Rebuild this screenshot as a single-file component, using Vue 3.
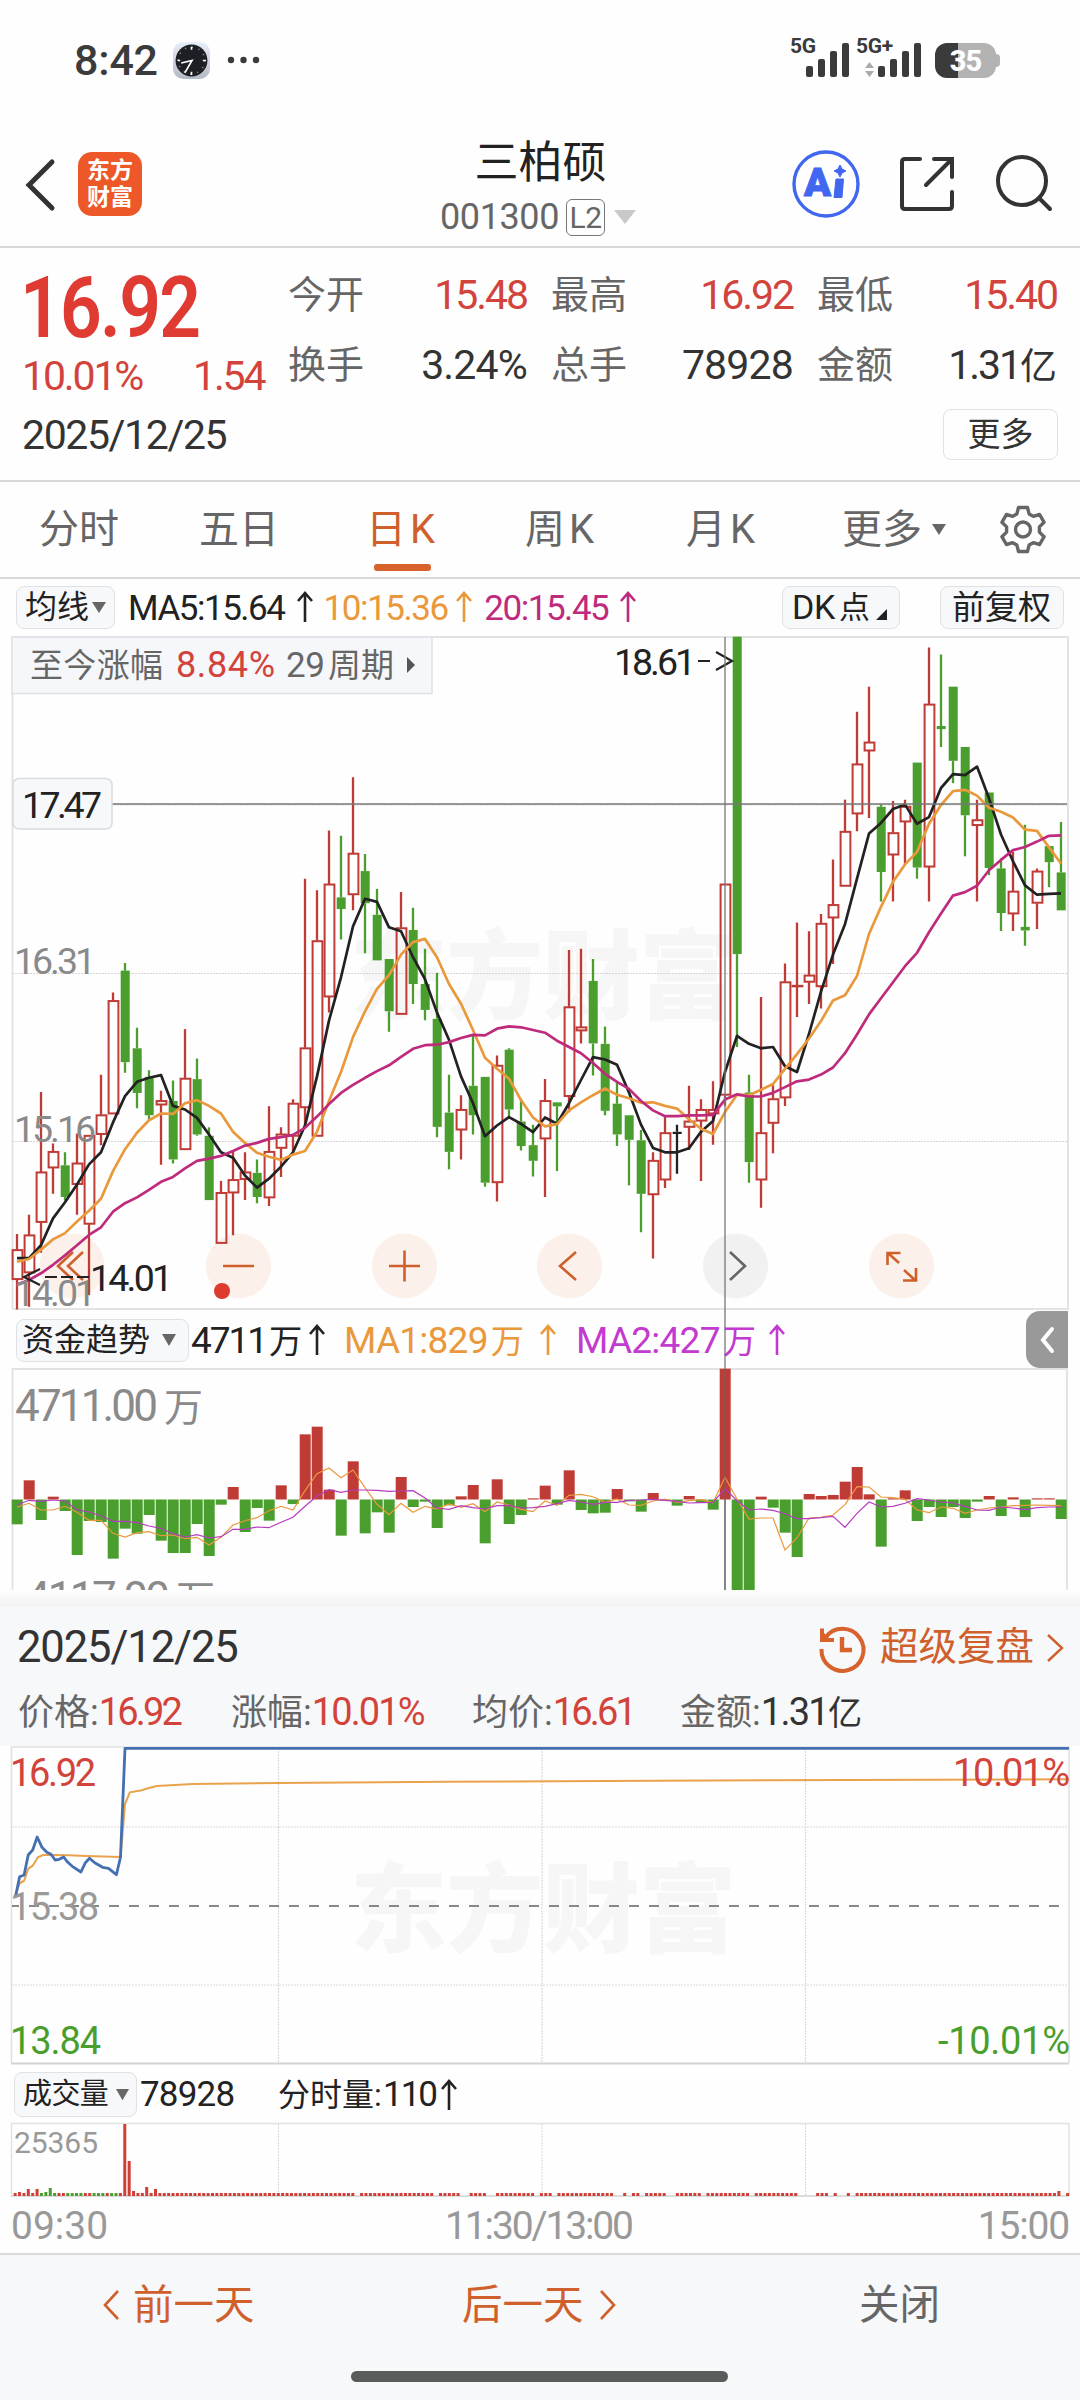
<script setup>
const UP = '#bf3b35'
const DOWN = '#4a9e2d'

const px = (i) => 17 + 12 * i
const ky = (v) => 630 + v / 2.24
const fy = (v) => 1300 + v / 3

// [colour, high, body top, body bottom, low]
const raw = `r 1353 1388 1455 1522|r 1310 1355 1440 1516|r 1035 1214 1327 1395|r 1150 1168 1205 1263|g 1170 1199 1270 1278|r 1128 1194 1242 1310|r 1132 1132 1331 1490|r 996 1086 1130 1154|r 812 830 1084 1084|g 746 763 968 992|g 891 937 1037 1071|g 986 1001 1087 1100|r 1032 1054 1064 1198|g 1009 1055 1186 1195|r 894 1004 1164 1164|g 960 1006 1130 1133|g 1114 1133 1277 1277|r 1234 1260 1374 1374|r 1165 1231 1261 1356|r 1170 1214 1231 1277|g 1186 1216 1270 1284|r 1067 1168 1272 1290|r 1114 1129 1161 1225|r 1051 1060 1134 1168|r 557 936 1070 1110|r 583 696 1134 1134|r 449 569 822 857|g 461 599 625 693|r 330 500 593 628|g 502 540 612 724|g 580 638 740 740|g 737 737 854 900|r 587 667 861 861|g 622 672 793 838|g 714 793 851 874|g 768 871 1113 1136|g 996 1081 1169 1208|r 1042 1074 1120 1186|g 905 1021 1087 1130|g 1001 1001 1238 1247|r 953 975 1238 1280|g 937 940 1074 1090|g 1050 1101 1156 1166|g 1108 1154 1189 1224|r 1006 1054 1140 1270|g 1058 1058 1067 1212|r 717 844 1045 1080|r 714 889 898 926|g 737 786 926 998|g 888 927 1077 1087|g 1014 1061 1130 1156|g 1087 1087 1142 1244|g 1120 1143 1263 1349|r 1170 1188 1265 1408|r 1090 1126 1232 1250|k 1108 1124 1129 1218|r 1021 1100 1114 1165|r 1051 1074 1100 1234|r 1011 1074 1084 1153|r 569 569 1042 1066|g 15 15 726 934|g 996 1036 1192 1238|r 822 1126 1232 1294|r 1020 1050 1105 1172|r 747 788 1048 1066|r 655 796 799 867|r 675 773 789 838|r 636 657 799 848|r 514 615 645 748|r 380 451 574 574|r 183 300 412 451|r 127 251 271 421|g 391 396 542 608|r 383 454 504 608|r 380 395 430 525|g 297 297 532 557|r 39 166 531 608|g 55 215 222 262|g 127 127 293 343|g 262 262 415 507|r 380 425 438 608|g 364 364 533 549|g 512 534 634 674|r 497 585 636 674|g 436 665 673 707|r 534 540 612 670|g 484 484 520 576|g 430 543 628 628`
const candles = raw.split('|').map((s, i) => {
  const [c, ...v] = s.split(' ')
  const [hi, top, bot, lo] = v.map((n) => ky(+n))
  return { x: px(i), hi, top, bot, lo, hollow: c === 'r', color: c === 'r' ? UP : c === 'g' ? DOWN : '#222' }
})

const line = (s, f) => s.split(' ').map((v, i) => `${px(i)},${f(+v).toFixed(1)}`).join(' ')
const ma5 = line('1407 1407 1378 1318 1282 1242 1197 1170 1103 1044 1012 1003 997 1066 1074 1093 1130 1170 1182 1222 1249 1229 1202 1170 1110 1000 875 778 664 602 609 666 675 733 782 857 918 1000 1060 1134 1110 1091 1106 1125 1092 1106 1060 1008 957 962 974 1036 1108 1160 1170 1170 1161 1124 1100 990 909 927 937 934 977 990 905 810 727 659 557 456 432 401 391 434 419 354 323 325 306 377 458 518 572 593 591 590', ky)
const ma10 = line('1415 1409 1388 1365 1351 1325 1301 1274 1212 1163 1126 1098 1083 1084 1060 1053 1066 1083 1124 1149 1171 1180 1187 1175 1167 1124 1055 990 912 854 804 773 727 699 692 733 793 837 896 958 983 1005 1053 1092 1112 1107 1076 1058 1042 1027 1041 1049 1059 1058 1066 1072 1096 1117 1129 1080 1041 1042 1030 1017 983 950 915 876 830 818 775 681 620 564 525 497 434 392 361 358 371 398 407 420 447 450 487 523', ky)
const ma20 = line('1466 1456 1441 1422 1401 1378 1355 1338 1303 1284 1271 1254 1236 1225 1206 1189 1184 1178 1167 1155 1149 1140 1136 1131 1115 1090 1062 1037 1019 1003 988 975 956 938 930 929 923 914 907 908 893 888 890 896 902 920 934 948 970 994 1012 1028 1055 1076 1089 1089 1087 1087 1086 1052 1040 1045 1045 1037 1024 1011 1007 996 980 948 906 861 825 789 753 723 677 635 595 587 573 538 515 493 486 474 461 460', ky)

const ZERO = 1499.5
const flows = '673 541 660 590 633 765 663 666 776 686 701 645 722 759 759 672 768 614 561 696 624 662 556 612 403 380 569 707 484 700 637 698 531 621 605 684 616 589 555 730 538 672 645 595 557 614 511 630 640 638 567 604 635 579 602 617 588 608 629 206 870 870 590 623 698 771 582 588 585 545 501 583 740 595 571 663 621 651 621 654 605 588 648 592 651 595 595 657'
  .split(' ').map((v, i) => {
    const y = fy(+v)
    const up = y < ZERO
    return { x: px(i) - 5.3, y: up ? y : ZERO, h: Math.abs(y - ZERO), color: up ? UP : DOWN }
  })
const flow1 = line('622 610 630 630 619 637 661 661 700 711 698 695 707 705 716 712 735 712 675 662 653 632 619 630 572 521 504 533 510 563 613 644 610 637 619 627 612 622 611 635 606 615 628 635 603 616 586 583 590 607 597 615 616 603 597 607 602 599 608 532 597 657 654 654 750 714 654 652 645 614 560 561 591 593 598 630 638 621 625 640 630 624 621 617 616 615 616 617', fy)
const flow2 = line('615 601 604 600 603 629 636 647 664 664 668 678 685 701 711 704 714 710 688 688 681 683 667 652 619 588 569 577 570 570 571 574 573 572 594 624 628 617 623 627 617 616 624 623 619 611 601 606 613 607 607 601 600 598 601 604 609 608 607 566 602 630 627 631 641 656 656 653 649 682 640 606 621 619 610 596 600 606 609 619 630 631 621 624 629 623 621 621', fy)

const trace = (s) => s.split(' ').map((p) => {
  const [a, b] = p.split(',')
  return `${(a / 2.904).toFixed(1)},${(1600 + b / 3).toFixed(1)}`
}).join(' ')
const price = trace('45,890 57,830 70,825 82,765 95,750 108,711 122,742 136,757 148,763 160,780 172,778 185,771 197,787 210,799 235,816 248,788 260,775 275,788 298,802 315,805 338,824 350,772 363,445 3104,445')
const avg = trace('45,885 57,850 70,842 82,806 95,797 110,772 125,765 148,765 200,766 250,768 350,771 356,700 363,612 377,577 412,571 425,566 455,558 560,552 810,549 1300,545 1900,542 3104,538')

// minute volume: one slot per trading minute
const gaps = [[516, 523], [630, 637], [669, 682], [707, 720], [778, 785], [803, 808], [892, 905], [910, 918], [930, 937], [968, 981], [1020, 1026], [1090, 1096], [1160, 1186], [1205, 1211], [1217, 1231], [1237, 1243], [1542, 1547]]
const head = 'r3 r4 r3 r7 r3 r7 g3 g4 g8 g3 r3 r3 g3 g3 g3 g3 r3 r3 g3 g3 g3 r3 g3 g3 r3 r72 r35 r5 r3 r3 r9 r3 r7'.split(' ')
const volumes = []
for (let i = 0; i < 241; i++) {
  const z = 22 + i * 6.367
  if (gaps.some(([a, b]) => z > a && z < b)) continue
  const t = head[i] || (i === 238 ? 'r5' : 'r3')
  const h = +t.slice(1)
  volumes.push({ x: z / 1.4519 - 1.5, y: 2196 - h, h, color: t[0] === 'r' ? '#cf3f38' : DOWN })
}

const tabs = [
  { t: '分时', c: 't1' }, { t: '五日', c: 't2' }, { t: '日K', c: 't3', on: true },
  { t: '周K', c: 't4' }, { t: '月K', c: 't5' },
]
</script>

<template>
  <div class="screen">
    <div class="status">
      <span class="time">8:42</span>
      <svg class="clock" viewBox="0 0 36 36">
        <defs><linearGradient id="case" x2="0" y2="1"><stop stop-color="#e8eff8" /><stop offset="1" stop-color="#b4bac4" /></linearGradient></defs>
        <rect width="36" height="36" rx="10" fill="url(#case)" /><circle cx="18" cy="18" r="15.500" fill="#1d1f24" />
        <circle cx="18" cy="18" r="13" fill="none" stroke="#999" stroke-width="1.600" stroke-dasharray="1 5.800" />
        <path d="M18 4.500v3M18 29v3M4.500 18h2.500M29 18h3" stroke="#fff" stroke-width="1.600" />
        <path d="M8 20.500l10.500-2.500-7 12" fill="none" stroke="#fff" stroke-width="1.600" />
      </svg>
      <svg class="dots" viewBox="0 0 36 8" fill="#3b3b3b"><circle cx="4" cy="4" r="3.200" /><circle cx="16.500" cy="4" r="3.200" /><circle cx="29" cy="4" r="3.200" /></svg>
      <span class="net n1">5G</span>
      <svg class="sig" viewBox="0 0 43 34" fill="#3b3b3b"><rect y="23" width="7" height="11" rx="2" /><rect x="12" y="16" width="7" height="18" rx="2" /><rect x="24" y="8" width="7" height="26" rx="2" /><rect x="36" width="7" height="34" rx="2" /></svg>
      <span class="net n2">5G+</span>
      <svg class="ud" viewBox="0 0 9 15" fill="#aaa"><path d="M4.500 0l4.500 6H0zM4.500 15l4.500-6H0z" /></svg>
      <svg class="sig" viewBox="0 0 43 34" fill="#3b3b3b"><rect y="23" width="7" height="11" rx="2" /><rect x="12" y="16" width="7" height="18" rx="2" /><rect x="24" y="8" width="7" height="26" rx="2" /><rect x="36" width="7" height="34" rx="2" /></svg>
      <div class="battery"><span>35</span></div>
    </div>

    <header class="head">
      <svg class="back" viewBox="0 0 30 52"><path d="M28 3L5 26l23 23" fill="none" stroke="#333" stroke-width="5" stroke-linecap="round" /></svg>
      <div class="logo"><span>东方</span><span>财富</span></div>
      <div class="title">
        <h1>三柏硕</h1>
        <div class="code"><span>001300</span><i>L2</i><svg viewBox="0 0 22 14"><path d="M0 0h22L11 14z" fill="#c9c9c9" /></svg></div>
      </div>
      <svg class="ai" viewBox="0 0 68 68">
        <circle cx="34" cy="34" r="32" fill="none" stroke="#4166f0" stroke-width="3.400" />
        <text x="12" y="46" font-size="38" font-weight="900" textLength="27" lengthAdjust="spacingAndGlyphs" fill="#4166f0" stroke="#4166f0" stroke-width="1">A</text>
        <path d="M44 29h7.500l-1.500 18.500h-8z" fill="#4166f0" stroke="#4166f0" stroke-linejoin="round" /><path d="M48 15l2 4 4 2-4 2-2 4-2-4-4-2 4-2z" fill="#4166f0" stroke="#4166f0" stroke-linejoin="round" />
      </svg>
      <svg class="share" viewBox="0 0 56 56" fill="none" stroke="#333" stroke-width="4" stroke-linecap="round"><path d="M21 3H6q-3 0-3 3v44q0 3 3 3h44q3 0 3-3V36" /><path d="M35 3h18v18M53 3L27 29" /></svg>
      <svg class="search" viewBox="0 0 58 58" fill="none" stroke="#333" stroke-width="4" stroke-linecap="round"><circle cx="27" cy="27" r="24" /><path d="M44 44l11 11" /></svg>
    </header>

    <section class="quote">
      <div class="left">
        <b class="red">16.92</b>
        <div class="chg num red"><span>10.01%</span><span>1.54</span></div>
        <div class="date num">2025/12/25</div>
      </div>
      <div class="right">
        <dl>
          <dt>今开</dt><dd class="red">15.48</dd><dt>最高</dt><dd class="red">16.92</dd><dt>最低</dt><dd class="red">15.40</dd>
          <dt>换手</dt><dd class="wide">3.24%</dd><dt>总手</dt><dd class="wide">78928</dd><dt>金额</dt><dd>1.31<small>亿</small></dd>
        </dl>
        <button class="more">更多</button>
      </div>
    </section>

    <nav class="tabs">
      <span v-for="t in tabs" :key="t.t" class="tab" :class="[t.c, { on: t.on }]">{{ t.t }}</span>
      <span class="tab t6">更多<svg viewBox="0 0 14 11"><path d="M0 0h14L7 11z" fill="#666" /></svg></span>
      <svg class="gear" viewBox="0 0 50 50" fill="none" stroke="#666" stroke-width="3.400" stroke-linejoin="round">
        <path d="M20.500 2.500h9l1.600 6.400 4.200 2.400 6.300-1.800 4.500 7.800-4.700 4.600v5.200l4.700 4.600-4.500 7.800-6.300-1.800-4.200 2.400-1.600 6.400h-9l-1.600-6.400-4.200-2.400-6.300 1.800-4.500-7.800 4.700-4.600v-5.200l-4.700-4.600 4.500-7.800 6.300 1.800 4.200-2.400z" /><circle cx="25" cy="24.500" r="7.500" />
      </svg>
    </nav>

    <div class="ma">
      <button class="pill p1">均线<svg viewBox="0 0 14 11"><path d="M0 0h14L7 11z" fill="#666" /></svg></button>
      <span class="v1">MA5:15.64</span><svg class="up k" viewBox="0 0 18 32"><path d="M9 31V2M2 10l7-8 7 8" /></svg>
      <span class="v2 or">10:15.36</span><svg class="up o" viewBox="0 0 18 32"><path d="M9 31V2M2 10l7-8 7 8" /></svg>
      <span class="v3 mg">20:15.45</span><svg class="up m" viewBox="0 0 18 32"><path d="M9 31V2M2 10l7-8 7 8" /></svg>
      <button class="pill p2">DK<span>点</span><svg viewBox="0 0 11 11"><path d="M11 0v11H0z" fill="#222" /></svg></button>
      <button class="pill p3">前复权</button>
    </div>

    <div class="kwrap">
      <svg class="kchart" width="1080" height="960" viewBox="0 630 1080 960">
        <g fill="none" stroke="#e3e3e3" stroke-width="2">
          <path d="M12.500 1309V637H1068V1309H12.500M12.500 1590V1369H1067V1590" />
        </g>
        <g class="wm"><text x="350" y="1011" textLength="386">东方财富</text></g>
        <g stroke="#d6d6d6" stroke-width="1" stroke-dasharray="2 1"><path d="M12 805H1067M12 973.500H1067M12 1141.500H1067" /></g>
        <g fill="#fbf1ea"><circle cx="72" cy="1266" r="32.500" /><circle cx="238.500" cy="1266" r="32.500" /><circle cx="404.500" cy="1266" r="32.500" /><circle cx="569.500" cy="1266" r="32.500" /><circle cx="901.500" cy="1266" r="32.500" /></g>
        <circle cx="735.500" cy="1266" r="32.500" fill="#f1f1f1" />

        <g v-for="c in candles" :key="c.x" :stroke="c.color" :fill="c.color">
          <path :d="`M${c.x} ${c.hi}V${c.top}M${c.x} ${c.bot}V${c.lo}`" stroke-width="2.300" />
          <rect v-if="c.hollow" :x="c.x - 4.400" :y="c.top + 0.500" width="9.800" :height="Math.max(c.bot - c.top - 1, 0.500)" fill="none" stroke-width="2" />
          <rect v-else :x="c.x - 4.300" :y="c.top" width="9" :height="c.bot - c.top" stroke="none" />
        </g>
        <g fill="none" stroke-width="2.700" stroke-linejoin="round">
          <polyline :points="ma5" stroke="#222" /><polyline :points="ma10" stroke="#e9993c" /><polyline :points="ma20" stroke="#bf2b7c" />
        </g>

        <g fill="none" stroke="#cf602c" stroke-width="2.600">
          <path d="M73 1252l-15 14 15 14M83 1252l-15 14 15 14M223 1266h31M389 1266h31M404.500 1250.500v31M576 1252l-16 14 16 14" />
          <path d="M899 1263l-11-10M887.500 1265v-12h13M904 1270l12 11M916 1268v12.500h-13" />
        </g>
        <path d="M730 1252l15 14-15 14" fill="none" stroke="#666" stroke-width="2.600" />
        <circle cx="222" cy="1291" r="8" fill="#dd3a30" />

        <g fill="none" stroke="#222" stroke-width="2.200"><path d="M40 1269l-16 8 16 8" /><path d="M45 1277h45" stroke-dasharray="12 4" /><path d="M698 661h12M716 652l16 9-16 9" /></g>
        <g class="lab" font-size="37.500">
          <text x="14" y="974" textLength="82">16.31</text><text x="14" y="1142" textLength="82">15.16</text><text x="14" y="1306" textLength="82">14.01</text>
          <text class="dk" x="90" y="1291" textLength="83">14.01</text><text class="dk" x="614" y="675" textLength="82">18.61</text>
        </g>

        <rect x="12" y="637" width="420" height="56.500" fill="#f6f7fa" stroke="#e0e1e4" stroke-width="1.500" />
        <g font-size="33"><text x="30" y="677" fill="#666" textLength="133">至今涨幅</text><text x="176" y="677" font-size="36" fill="#d2433b" textLength="99">8.84%</text><text x="286" y="677" fill="#666" font-size="35" textLength="39">29</text><text x="328" y="677" fill="#666">周期</text></g>
        <path d="M407 657v16l8-8z" fill="#555" />

        <path d="M112 804H1067M725 637V1590" stroke="#777" stroke-width="1.300" />
        <rect x="13" y="778.500" width="99" height="50.500" rx="6" fill="#f7f8fa" stroke="#d9dbdf" stroke-width="1.500" />
        <text x="22" y="818" font-size="37.500" fill="#222" textLength="80">17.47</text>

        <g class="lab" font-size="44"><text x="15" y="1421" textLength="143">4711.00</text><text x="164" y="1421" font-size="39">万</text><text x="16" y="1613" textLength="154">-4117.00</text><text x="176" y="1613" font-size="39">万</text></g>
        <rect v-for="b in flows" :key="b.x" :x="b.x" :y="b.y" width="11" :height="b.h" :fill="b.color" />
        <g fill="none" stroke-width="1.200"><polyline :points="flow1" stroke="#e9993c" /><polyline :points="flow2" stroke="#b63bc0" /></g>
        <path d="M725 1369V1590" stroke="#666" stroke-opacity=".7" stroke-width="1.500" />
      </svg>
      <div class="fund">
        <button class="pill p4">资金趋势<svg viewBox="0 0 14 12"><path d="M0 0h14L7 12z" fill="#666" /></svg></button>
        <span class="f1">4711<small>万</small></span><svg class="up k" viewBox="0 0 18 32"><path d="M9 31V2M2 10l7-8 7 8" /></svg>
        <span class="f2 or">MA1:829<small>万</small></span><svg class="up o" viewBox="0 0 18 32"><path d="M9 31V2M2 10l7-8 7 8" /></svg>
        <span class="f3 pu">MA2:427<small>万</small></span><svg class="up p" viewBox="0 0 18 32"><path d="M9 31V2M2 10l7-8 7 8" /></svg>
        <div class="side"><svg viewBox="0 0 16 28"><path d="M13 3L4 14l9 11" fill="none" stroke="#fff" stroke-width="4" stroke-linecap="round" /></svg></div>
      </div>
    </div>

    <div class="shade"></div>
    <section class="panel">
      <div class="prow">
        <span class="pdate">2025/12/25</span>
        <svg class="hist" viewBox="0 0 46 46" fill="none" stroke="#d8622b" stroke-width="4"><path d="M6.500 12.500A21 21 0 1 1 2.500 24" /><path d="M3 3.500V15H15" /><path d="M23 12v13h10" stroke-width="4.400" /><path d="M3 6v9h9z" fill="#d8622b" stroke="none" /></svg>
        <span class="replay">超级复盘</span>
        <svg class="go" viewBox="0 0 18 30"><path d="M2 2l14 13L2 28" fill="none" stroke="#cf602c" stroke-width="2.400" /></svg>
      </div>
      <div class="stats">
        <span>价格:<em>16.92</em></span><span>涨幅:<em class="pc">10.01%</em></span><span>均价:<em>16.61</em></span><span>金额:<em class="blk">1.31<small>亿</small></em></span>
      </div>
    </section>

    <svg class="intraday" width="1080" height="322" viewBox="0 1746 1080 322">
      <g class="wm"><text x="350" y="1944" textLength="386">东方财富</text></g>
      <path d="M11.500 2063V1747H1069V2063" fill="none" stroke="#e0e0e0" stroke-width="1.600" /><path d="M11 2063.500H1069" stroke="#d3d3d3" stroke-width="2" />
      <g stroke="#dadada" stroke-width="1.200" stroke-dasharray="2 1"><path d="M12 1827H1068M12 1985H1068M278.500 1748V2062M542 1748V2062M805.500 1748V2062" /></g>
      <path d="M12 1906H1068" stroke="#888" stroke-width="1.800" stroke-dasharray="10 10" stroke-dashoffset="3" />
      <polyline :points="avg" fill="none" stroke="#e9a24c" stroke-width="2" />
      <polyline :points="price" fill="none" stroke="#446fb0" stroke-width="2.800" stroke-linejoin="round" />
      <g font-size="38">
        <text x="10" y="1786" fill="#d2433b" textLength="86">16.92</text><text x="10" y="1920" fill="#999" textLength="89">15.38</text><text x="10" y="2054" fill="#4a9e2d" textLength="91">13.84</text>
        <text x="953" y="1786" fill="#d2433b" textLength="117">10.01%</text><text x="938" y="2054" fill="#4a9e2d" textLength="132">-10.01%</text>
      </g>
    </svg>

    <div class="vol">
      <button class="pill p5">成交量<svg viewBox="0 0 14 12"><path d="M0 0h14L7 12z" fill="#666" /></svg></button>
      <span class="s1">78928</span><span class="s2">分时量:</span><span class="s3">110</span><svg class="up k" viewBox="0 0 18 32"><path d="M9 31V2M2 10l7-8 7 8" /></svg>
    </div>
    <svg class="volume" width="1080" height="78" viewBox="0 2121 1080 78">
      <path d="M11.500 2196V2123.500H1069V2196" fill="none" stroke="#e2e2e2" stroke-width="1.500" /><path d="M11 2196H1069" stroke="#ddd" stroke-width="2" />
      <path d="M278.500 2124V2195M542 2124V2195M805.500 2124V2195" stroke="#dadada" stroke-dasharray="2 1" />
      <text x="14" y="2153" font-size="30" fill="#999" textLength="84">25365</text>
      <rect v-for="v in volumes" :key="v.x" :x="v.x" :y="v.y" width="3" :height="v.h" :fill="v.color" />
    </svg>
    <div class="times"><span>09:30</span><span class="mid">11:30/13:00</span><span class="end">15:00</span></div>

    <footer>
      <div class="acts">
        <span class="a1"><svg viewBox="0 0 18 32"><path d="M16 2L3 16l13 14" fill="none" stroke="#cf602c" stroke-width="2.600" /></svg>前一天</span>
        <span class="a2">后一天<svg viewBox="0 0 18 32"><path d="M2 2l13 14L2 30" fill="none" stroke="#cf602c" stroke-width="2.600" /></svg></span>
        <span class="a3">关闭</span>
      </div>
      <div class="home"></div>
    </footer>
  </div>
</template>

<style>
body { margin: 0; background: #fefefe; }
</style>

<style scoped>
.screen { width: 1080px; height: 2400px; overflow: hidden; background: #fefefe; color: #333; font-family: Roboto, "Noto Sans CJK SC", sans-serif; display: flex; flex-direction: column; line-height: 1; white-space: nowrap; }
.screen > * { flex: none; box-sizing: border-box; }
svg { display: block; flex: none; overflow: visible; }
button { font: inherit; color: inherit; margin: 0; box-sizing: border-box; }
small { font-size: .9em; letter-spacing: 0; }
.red { color: #d2433b; } .or { color: #e9993c; } .mg { color: #bf2b7c; } .pu { color: #c23ad0; }
.num { letter-spacing: -.034em; }

.status { height: 120px; display: flex; align-items: center; padding-left: 74px; color: #3b3b3b; }
.time { font-size: 43px; font-weight: 500; width: 99px; letter-spacing: -.2px; }
.clock { width: 37px; height: 37px; }
.dots { width: 36px; margin-left: 17px; margin-right: 527px; }
.net { font-size: 21px; font-weight: 700; align-self: flex-start; margin-top: 36px; letter-spacing: -.3px; }
.n1 { width: 16px; } .n2 { width: 9px; margin-left: 7px; }
.sig { width: 43px; height: 34px; }
.ud { width: 9px; height: 15px; align-self: flex-start; margin-top: 62px; margin-right: 4px; }
.battery { width: 61px; height: 35px; border-radius: 12px; margin-left: 14px; background: linear-gradient(90deg, #3b3b3b 38%, #b3b3b3 38%); position: relative; text-align: center; color: #fff; font-size: 29px; font-weight: 800; line-height: 36px; letter-spacing: -1px; }
.battery::after { content: ""; position: absolute; left: 60px; top: 11px; width: 5px; height: 13px; border-radius: 0 4px 4px 0; background: #b3b3b3; }

.head { height: 128px; border-bottom: 2px solid #d8d8d8; display: flex; align-items: flex-start; }
.back { width: 30px; height: 52px; margin: 39px 0 0 24px; }
.logo { width: 64px; height: 64px; border-radius: 14px; background: #ee5828; color: #fff; margin: 32px 0 0 24px; font-size: 23px; font-weight: 600; line-height: 27px; display: flex; flex-direction: column; align-items: center; justify-content: center; }
.title { width: 200px; margin-left: 298px; }
h1 { margin: 20px 0 0; font-size: 44px; line-height: 46px; font-weight: 400; color: #222; text-align: center; width: 201px; }
.code { display: flex; align-items: center; height: 40px; margin-top: 11px; color: #666; font-size: 36px; letter-spacing: -.4px; }
.code span { width: 126px; }
.code i { font-style: normal; border: 1.5px solid #777; border-radius: 6px; width: 37px; height: 35px; line-height: 36px; font-size: 30px; text-align: center; }
.code svg { width: 22px; height: 14px; margin-left: 9px; }
.ai { width: 68px; height: 68px; margin: 30px 0 0 152px; }
.share { width: 56px; height: 56px; margin: 36px 0 0 39px; }
.search { width: 58px; height: 58px; margin: 34px 0 0 40px; }

.quote { height: 234px; border-bottom: 2px solid #d8d8d8; display: flex; }
.left { width: 289px; padding-left: 22px; box-sizing: border-box; }
.left b { display: block; width: 240px; font-size: 85px; font-weight: 600; letter-spacing: -2px; color: #df3b33; margin: 18px 0 0 -2px; line-height: 84px; transform: scaleX(.86); transform-origin: 0 50%; }
.chg { display: flex; font-size: 41px; margin-top: 6px; line-height: 41px; letter-spacing: -.052em; }
.chg span:first-child { width: 171px; }
.date { font-size: 41px; line-height: 41px; margin-top: 18px; color: #333; }
.right { width: 768px; display: flex; flex-direction: column; align-items: flex-end; }
dl { margin: 12px 0 0; width: 769px; display: grid; grid-template-columns: 76px 163px 101px 165px 101px 163px; grid-auto-rows: 70px; align-items: center; }
dt { font-size: 38px; color: #666; }
dt:nth-of-type(3n+2), dt:nth-of-type(3n) { padding-left: 24px; }
dd { margin: 0; font-size: 41px; text-align: right; letter-spacing: -.05em; }
dd.wide { letter-spacing: -.02em; }
.more { width: 115px; height: 51px; border: 1.5px solid #e0e1e4; border-radius: 8px; background: none; font-size: 33px; padding: 0; margin: 9px -1px 0 0; line-height: 48px; }

.tabs { height: 97px; border-bottom: 2px solid #d8d8d8; display: flex; align-items: center; }
.tab { font-size: 40px; color: #666; display: flex; align-items: center; height: 95px; position: relative; box-sizing: border-box; }
.t1 { width: 160px; margin-left: 39px; } .t2 { width: 167px; } .t3 { width: 159px; letter-spacing: 4px; } .t4 { width: 161px; letter-spacing: 4px; } .t5 { width: 156px; letter-spacing: 4px; }
.t6 svg { width: 14px; height: 11px; margin-left: 10px; }
.on { color: #cf602c; }
.on::after { content: ""; position: absolute; left: 8px; bottom: 6px; width: 57px; height: 7px; border-radius: 3px; background: #d8622b; }
.gear { width: 50px; height: 50px; margin-left: 52px; }

.pill { background: #f7f8fa; border: 1.5px solid #e0e1e4; border-radius: 8px; height: 43px; padding: 0; display: flex; align-items: center; color: #222; flex: none; }
.up { width: 18px; height: 32px; fill: none; stroke-width: 2.6; }
.k { stroke: #222; } .o { stroke: #e9993c; } .m { stroke: #bf2b7c; } .p { stroke: #c23ad0; }
.ma { height: 51px; padding: 5px 16px 0; display: flex; align-items: center; font-size: 35px; letter-spacing: -.042em; color: #222; }
.ma > span { padding-top: 2px; }
.ma .pill, .fund .pill, .vol .pill { letter-spacing: 0; font-size: 32px; }
.p1 { width: 99px; padding-left: 8px; } .p1 svg { width: 14px; margin-left: 3px; }
.v1 { width: 168px; margin-left: 13px; } .v2 { width: 132px; margin-left: 10px; } .v3 { width: 135px; margin-left: 11px; }
.ma .p2 { width: 118px; margin-left: 145px; padding-left: 9px; letter-spacing: -.3px; font-size: 34px; } .p2 span { font-size: 31px; margin-left: 4px; } .p2 svg { width: 11px; margin: 14px 0 0 6px; }
.ma .p3 { width: 124px; margin-left: 40px; padding-left: 11px; font-size: 33px; }

.kwrap { height: 960px; position: relative; overflow: hidden; }
.fund { position: absolute; left: 16px; top: 680px; height: 60px; width: 1052px; display: flex; align-items: center; font-size: 37px; color: #222; letter-spacing: -.02em; }
.fund small { margin-left: 3px; }
.p4 { width: 173px; padding-left: 5px; } .p4 svg { width: 14px; margin-left: 12px; }
.f1 { width: 117px; margin-left: 2px; letter-spacing: -.055em; } .f2 { width: 195px; margin-left: 18px; } .f3 { width: 192px; margin-left: 19px; }
.side { width: 42px; height: 57px; border-radius: 14px 0 0 14px; background: #999; display: flex; align-items: center; justify-content: center; position: absolute; right: 0; top: 1px; }
.side svg { width: 16px; height: 28px; }
.wm text { font-size: 97px; font-weight: 900; fill: #f6f6f6; }
.lab { fill: #8a8a8a; } .dk { fill: #222; }

.shade { height: 16px; background: linear-gradient(#fefefe, #f2f2f3); }
.panel { height: 140px; background: #f7f8fa; }
.prow { display: flex; align-items: center; height: 83px; padding-left: 17px; }
.pdate { font-size: 43.5px; width: 802px; letter-spacing: -.025em; }
.hist { width: 46px; height: 46px; }
.replay { color: #cf602c; font-size: 38.5px; margin-left: 15px; width: 166px; }
.go { width: 18px; height: 30px; }
.stats { display: grid; grid-template-columns: 213px 241px 208px 200px; padding-left: 18px; font-size: 36px; color: #666; line-height: 46px; }
em { font-style: normal; font-size: 38px; color: #d2433b; letter-spacing: -.075em; }
em.pc { letter-spacing: -.05em; }
em.blk { color: #333; letter-spacing: -.045em; }

.vol { height: 53px; padding: 0 14px; display: flex; align-items: center; font-size: 35px; color: #222; }
.vol .p5 { width: 123px; padding-left: 8px; font-size: 29px; letter-spacing: -.6px; height: 45px; } .p5 svg { width: 13px; margin-left: 8px; }
.s1 { margin-left: 3px; width: 138px; letter-spacing: -.8px; } .s2 { font-size: 32px; width: 105px; } .s3 { width: 57px; letter-spacing: -2px; }
.times { height: 54px; display: flex; justify-content: space-between; align-items: center; padding: 0 11px; font-size: 39px; color: #999; }
.mid { letter-spacing: -.055em; margin-left: -9px; } .end { letter-spacing: -.03em; }
footer { height: 148px; flex: none; border-top: 2px solid #d9dbdf; background: #f7f8fa; }
.acts { height: 100px; display: flex; align-items: center; font-size: 40.5px; color: #cf602c; }
.acts span { display: flex; align-items: center; box-sizing: border-box; }
.acts svg { width: 18px; height: 32px; }
.a1 { width: 462px; padding-left: 102px; } .a1 svg { margin-right: 13px; }
.a2 { width: 397px; } .a2 svg { margin-left: 15px; }
.a3 { color: #666; }
.home { width: 377px; height: 11px; border-radius: 6px; background: #5a5c5b; margin: 16px 0 0 351px; }
</style>
